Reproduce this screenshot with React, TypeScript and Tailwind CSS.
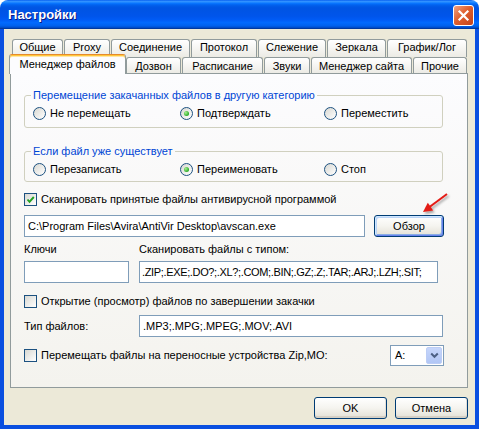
import React from 'react';

const backTabs = [
  { label: 'Общие', w: 'w-[51px]' },
  { label: 'Proxy', w: 'w-[46px]' },
  { label: 'Соединение', w: 'w-[79px]' },
  { label: 'Протокол', w: 'w-[66px]' },
  { label: 'Слежение', w: 'w-[68px]' },
  { label: 'Зеркала', w: 'w-[59px]' },
  { label: 'График/Лог', w: 'w-[80px]' },
];

const frontTabs = [
  { label: 'Дозвон', w: 'w-[55px]' },
  { label: 'Расписание', w: 'w-[81px]' },
  { label: 'Звуки', w: 'w-[46px]' },
  { label: 'Менеджер сайта', w: 'w-[101px]' },
  { label: 'Прочие', w: 'w-[54px]' },
];

const tabBase =
  'flex items-center justify-center mr-[1px] border border-b-0 border-[#919b9c] rounded-t-[3px] bg-gradient-to-b from-white to-[#ecebe5]';

const inputBase = 'flex items-center h-[22px] px-[3px] bg-white border border-[#7f9db9] whitespace-nowrap overflow-hidden';

const btnBase =
  'flex items-center justify-center h-[22px] rounded-[3px] border border-[#003c74] bg-gradient-to-b from-white via-[#f5f4ef] to-[#e3e0d6]';

function Radio({ label, checked }: { label: string; checked?: boolean }) {
  return (
    <div className="flex items-center h-[13px]">
      <span className="flex shrink-0 items-center justify-center w-[13px] h-[13px] rounded-full border border-[#1c5180] bg-[linear-gradient(135deg,#d8d8d2,#ffffff)]">
        {checked && (
          <span className="w-[5px] h-[5px] rounded-full bg-[radial-gradient(circle_at_35%_35%,#a8f08f,#22a622_75%)]" />
        )}
      </span>
      <span className="ml-[4px]">{label}</span>
    </div>
  );
}

function Check({ label, checked }: { label: string; checked?: boolean }) {
  return (
    <div className="flex items-center h-[13px]">
      <span className="flex shrink-0 items-center justify-center w-[13px] h-[13px] border border-[#1c5180] bg-[linear-gradient(135deg,#d8d8d2,#ffffff)]">
        {checked && (
          <svg width="11" height="11" viewBox="0 0 11 11">
            <polyline points="2.5,5.5 4.5,7.8 8.8,3" fill="none" stroke="#21a121" strokeWidth="1.9" />
          </svg>
        )}
      </span>
      <span className="ml-[4px]">{label}</span>
    </div>
  );
}

function Group({ title, items, className }: { title: string; items: [string, boolean][]; className: string }) {
  return (
    <fieldset className={`w-[419px] border border-[#d0d0bf] rounded-[3px] ${className}`}>
      <legend className="ml-[6px] px-[2px] text-[#0046d5] leading-[13px]">{title}</legend>
      <div className="grid grid-cols-[147px_144px_1fr] pl-[8px] mt-[5px]">
        {items.map(([label, checked]) => (
          <Radio key={label} label={label} checked={checked} />
        ))}
      </div>
    </fieldset>
  );
}

export default function App() {
  return (
    <div className="relative w-[479px] h-[429px] bg-white font-['Liberation_Sans',Arial,sans-serif] text-[11px] leading-[13px] text-black">
      <div className="flex flex-col w-full h-full rounded-t-[8px] overflow-hidden">
        {/* title bar */}
        <div className="flex items-center justify-between h-[29px] shrink-0 pl-[8px] pr-[5px] bg-[linear-gradient(#0058ee_0%,#3593ff_4%,#288eff_7%,#127dff_10%,#036ffc_13%,#0262ee_17%,#0057e5_24%,#0054e3_30%,#0055eb_56%,#005bf5_68%,#026afe_78%,#0062ef_88%,#0052d6_94%,#0040ab_97%,#003092_100%)]">
          <span className="text-white font-bold text-[13px] [text-shadow:1px_1px_0_#0a1883]">Настройки</span>
          <div className="flex items-center justify-center w-[21px] h-[21px] mt-[1px] rounded-[3px] border border-white bg-[linear-gradient(135deg,#f0a283,#e0602f_45%,#c4421b)]">
            <svg width="13" height="13" viewBox="0 0 13 13">
              <path d="M2.5 2.5 L10.5 10.5 M10.5 2.5 L2.5 10.5" stroke="white" strokeWidth="2.2" strokeLinecap="square" />
            </svg>
          </div>
        </div>

        {/* body */}
        <div className="flex-1 flex flex-col pl-[6px] pr-[7px] pt-[10px] bg-[#ece9d8] border-x-[4px] border-b-[4px] border-[#0a4fe0]">
          {/* tabs */}
          <div className="flex ml-[2px] h-[18px]">
            {backTabs.map((t) => (
              <div key={t.label} className={`${tabBase} ${t.w} h-[18px] pb-[2px]`}>
                {t.label}
              </div>
            ))}
          </div>
          <div className="relative z-10 flex items-end -ml-[1px] h-[16px]">
            <div className="relative flex items-start justify-center pt-[3px] w-[117px] h-[20px] -mb-[1px] border border-b-0 border-x-[#919b9c] border-t-[#e68b2c] rounded-t-[3px] bg-[#fcfcfe] shadow-[inset_0_1px_0_#ffc73c,inset_0_2px_0_#ffe6a6]">
              Менеджер файлов
            </div>
            {frontTabs.map((t) => (
              <div key={t.label} className={`${tabBase} ${t.w} h-[16px] pt-[1px]`}>
                {t.label}
              </div>
            ))}
          </div>

          {/* panel */}
          <div className="flex flex-col w-[458px] h-[315px] pl-[13px] border border-[#919b9c] bg-gradient-to-b from-[#fcfcfe] to-[#f4f3ee]">
            <Group
              className="mt-[15px] pb-[7px]"
              title="Перемещение закачанных файлов в другую категорию"
              items={[
                ['Не перемещать', false],
                ['Подтверждать', true],
                ['Переместить', false],
              ]}
            />
            <Group
              className="mt-[17px] pb-[5px]"
              title="Если файл уже существует"
              items={[
                ['Перезаписать', false],
                ['Переименовать', true],
                ['Стоп', false],
              ]}
            />

            <div className="mt-[11px]">
              <Check label="Сканировать принятые файлы антивирусной программой" checked />
            </div>

            <div className="flex items-center mt-[9px] h-[22px]">
              <div className={`${inputBase} w-[341px]`}>C:\Program Files\Avira\AntiVir Desktop\avscan.exe</div>
              <div className={`${btnBase} ml-[9px] w-[70px] shadow-[inset_1px_1px_0_#cee7ff,inset_-1px_-1px_0_#6982ee,inset_2px_2px_0_#bcd4f6,inset_-2px_-2px_0_#89ade4]`}>
                Обзор
              </div>
            </div>

            <div className="flex mt-[6px]">
              <span className="w-[115px]">Ключи</span>
              <span>Сканировать файлы с типом:</span>
            </div>
            <div className="flex mt-[5px]">
              <div className={`${inputBase} w-[105px]`} />
              <div className={`${inputBase} ml-[10px] w-[299px] pl-[2px] tracking-[-0.35px]`}>.ZIP;.EXE;.DO?;.XL?;.COM;.BIN;.GZ;.Z;.TAR;.ARJ;.LZH;.SIT;</div>
            </div>

            <div className="mt-[12px]">
              <Check label="Открытие (просмотр) файлов по завершении закачки" />
            </div>

            <div className="flex items-center mt-[7px]">
              <span className="w-[115px]">Тип файлов:</span>
              <div className={`${inputBase} w-[304px]`}>.MP3;.MPG;.MPEG;.MOV;.AVI</div>
            </div>

            <div className="flex items-center justify-between w-[420px] h-[21px] mt-[8px]">
              <Check label="Перемещать файлы на переносные устройства Zip,MO:" />
              <div className="flex items-center justify-between w-[54px] h-[21px] pl-[4px] pr-[1px] bg-white border border-[#7f9db9]">
                <span>A:</span>
                <div className="flex items-center justify-center w-[16px] h-[17px] rounded-[2px] bg-gradient-to-b from-[#c6d6fb] to-[#b1c6f5] border border-[#bccdf5]">
                  <svg width="9" height="7" viewBox="0 0 9 7">
                    <polyline points="1.2,1.5 4.5,4.8 7.8,1.5" fill="none" stroke="#4d6185" strokeWidth="2" />
                  </svg>
                </div>
              </div>
            </div>
          </div>

          {/* buttons */}
          <div className="flex justify-end mt-[9px] w-[458px]">
            <div className={`${btnBase} w-[73px] shadow-[inset_0_-2px_0_#d6d0c5,inset_-1px_0_0_#e3e0d8]`}>OK</div>
            <div className={`${btnBase} ml-[8px] w-[73px] shadow-[inset_0_-2px_0_#d6d0c5,inset_-1px_0_0_#e3e0d8]`}>Отмена</div>
          </div>
        </div>
      </div>

      {/* red annotation arrow */}
      <svg className="absolute left-[415px] top-[188px]" width="40" height="32" viewBox="0 0 40 32">
        <defs>
          <filter id="sh" x="-30%" y="-30%" width="160%" height="160%">
            <feDropShadow dx="1.5" dy="2" stdDeviation="1" floodColor="#000" floodOpacity="0.35" />
          </filter>
        </defs>
        <g filter="url(#sh)">
          <line x1="32" y1="6" x2="14.5" y2="19" stroke="#e31b14" strokeWidth="2" />
          <polygon points="8,24 18.2,22.4 12.8,14.8" fill="#e31b14" />
        </g>
      </svg>
    </div>
  );
}
